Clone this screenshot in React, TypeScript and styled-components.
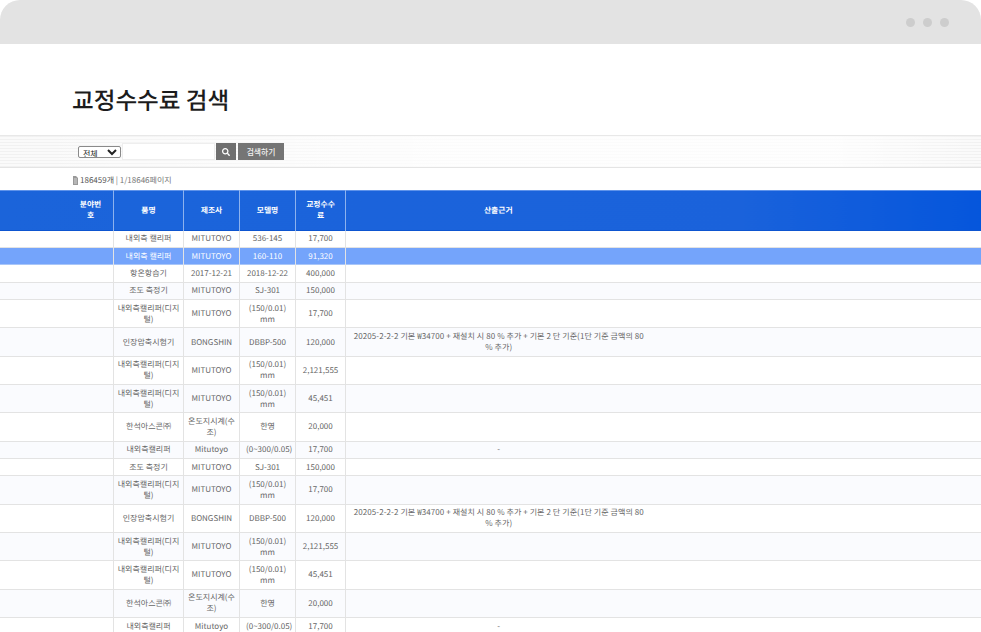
import React from 'react';
import styled, { createGlobalStyle } from 'styled-components';
import { FaSearch } from 'react-icons/fa';

const GlobalStyle = createGlobalStyle`
  html, body {
    margin: 0;
    padding: 0;
    background: #fff;
    overflow: hidden;
  }
  * {
    box-sizing: border-box;
  }
`;

const FONT = `"Noto Sans CJK KR", "Noto Sans", sans-serif`;

const Page = styled.div`
  width: 981px;
  height: 632px;
  overflow: hidden;
  font-family: ${FONT};
  color: #666;
  text-rendering: geometricPrecision;
`;

const WindowBar = styled.div`
  height: 44px;
  background: #e3e3e3;
  border-radius: 20px 20px 0 0;
  display: flex;
  justify-content: flex-end;
  align-items: center;
  gap: 8px;
  padding: 0 32px 0 0;
`;

const Dot = styled.span`
  width: 9px;
  height: 9px;
  border-radius: 50%;
  background: #cdcdcd;
`;

const Title = styled.h1`
  margin: 0;
  height: 91px;
  padding: 37px 0 0 72px;
  font-size: 23.6px;
  line-height: 36px;
  font-weight: 500;
  color: #1c1c1c;
`;

const SearchBand = styled.form`
  height: 33px;
  display: flex;
  align-items: center;
  padding: 0 0 0 78px;
  border-top: 1px solid #e8e8e8;
  border-bottom: 1px solid #e4e4e4;
  background:
    linear-gradient(90deg, rgba(255,255,255,0) 0, rgba(255,255,255,0.75) 45%, rgba(255,255,255,0.75) 85%, rgba(255,255,255,0) 100%),
    repeating-linear-gradient(180deg, #f1f1f1 0, #f1f1f1 1px, #fafafa 1px, #fafafa 3px);
`;

const Select = styled.select`
  width: 43px;
  height: 12px;
  font-size: 8px;
  line-height: 10px;
  padding: 0;
  font-family: ${FONT};
  color: #222;
  background: #fff;
  border: 1px solid #8a8a8a;
  border-radius: 2px;
`;

const SearchInput = styled.input`
  width: 93px;
  height: 17px;
  margin-left: 1px;
  border: 1px solid #eeeeee;
  background: #fff;
  padding: 0 3px;
`;

const IconButton = styled.button`
  width: 20px;
  height: 17px;
  margin-left: 1px;
  border: 0;
  padding: 0;
  background: #6f6f6f;
  color: #fff;
  font-size: 8px;
  display: flex;
  align-items: center;
  justify-content: center;
`;

const SubmitButton = styled.button`
  width: 46px;
  height: 17px;
  margin-left: 2px;
  border: 0;
  padding: 0;
  background: #757575;
  color: #f2f2f2;
  font-size: 7.8px;
  font-weight: 500;
  font-family: ${FONT};
`;

const Summary = styled.div`
  height: 22px;
  padding: 2px 0 0 73px;
  display: flex;
  align-items: center;
  gap: 2px;
  font-size: 8px;
  color: #777;
`;

const Strong = styled.span`
  color: #555;
`;

const Table = styled.table`
  width: 981px;
  table-layout: fixed;
  border-collapse: collapse;
  font-size: 8px;
  line-height: 11px;
`;

const HeadRow = styled.tr`
  height: 39.5px;
  background: linear-gradient(90deg, #1b64da 0, #1a62db 75%, #0556dc 100%);
  border-top: 1px solid #5f93ea;
  border-bottom: 1px solid #0d55d0;
`;

const Th = styled.th<{ $plain?: boolean }>`
  padding: 0 2px;
  color: #fff;
  font-weight: 700;
  font-size: 7.8px;
  text-align: center;
  word-break: break-all;
  border-right: ${p => (p.$plain ? '0' : '1px solid #8db2ee')};
`;

const NumberHead = styled.div`
  width: 25px;
  margin: 0 8px 0 auto;
`;

const FeeHead = styled.div`
  width: 34px;
  margin: 0 auto;
`;

const Tr = styled.tr<{ $tint?: boolean; $active?: boolean; $tall?: boolean }>`
  height: ${p => (p.$tall ? '28.3px' : '17.4px')};
  background: ${p => (p.$active ? '#74a4fb' : p.$tint ? '#fafbfe' : '#fff')};
  color: ${p => (p.$active ? '#fff' : '#666')};
  border-bottom: 1px solid ${p => (p.$active ? '#a9c6f8' : '#e3e3e3')};
`;

const Td = styled.td<{ $plain?: boolean }>`
  padding: 0 3px;
  text-align: center;
  vertical-align: middle;
  word-break: break-all;
  border-right: ${p => (p.$plain ? '0' : '1px solid #e3e3e3')};
`;

const ModelTd = styled(Td)`
  padding: 0 6px;
  word-break: normal;
`;

const BasisTd = styled(Td)`
  padding: 0 5px 0 6px;
  word-break: normal;
  letter-spacing: 0.09px;
`;

const DocIcon = () => (
  <svg width="5" height="9" viewBox="0 0 5 9">
    <path d="M0 0h3l2 2v7H0z" fill="#999" />
    <path d="M1 3h3M1 5h3M1 7h3" stroke="#eee" strokeWidth="0.7" />
  </svg>
);

const BASIS =
  '20205-2-2-2 기본 ₩34700 + 재설치 시 80 % 추가 + 기본 2 단 기준(1단 기준 금액의 80 % 추가)';

type Row = {
  name: string;
  maker: string;
  model: string;
  fee: string;
  basis?: string;
  tall?: boolean;
  tint?: boolean;
  active?: boolean;
};

const rows: Row[] = [
  { name: '내외측 캘리퍼', maker: 'MITUTOYO', model: '536-145', fee: '17,700' },
  { name: '내외측 캘리퍼', maker: 'MITUTOYO', model: '160-110', fee: '91,320', active: true },
  { name: '항온항습기', maker: '2017-12-21', model: '2018-12-22', fee: '400,000' },
  { name: '조도 측정기', maker: 'MITUTOYO', model: 'SJ-301', fee: '150,000', tint: true },
  { name: '내외측캘리퍼(디지털)', maker: 'MITUTOYO', model: '(150/0.01) mm', fee: '17,700', tall: true },
  { name: '인장압축시험기', maker: 'BONGSHIN', model: 'DBBP-500', fee: '120,000', basis: BASIS, tall: true, tint: true },
  { name: '내외측캘리퍼(디지털)', maker: 'MITUTOYO', model: '(150/0.01) mm', fee: '2,121,555', tall: true },
  { name: '내외측캘리퍼(디지털)', maker: 'MITUTOYO', model: '(150/0.01) mm', fee: '45,451', tall: true, tint: true },
  { name: '한석아스콘㈜', maker: '온도지시계(수조)', model: '한영', fee: '20,000', tall: true },
  { name: '내외측캘리퍼', maker: 'Mitutoyo', model: '(0~300/0.05)', fee: '17,700', basis: '-', tint: true },
  { name: '조도 측정기', maker: 'MITUTOYO', model: 'SJ-301', fee: '150,000' },
  { name: '내외측캘리퍼(디지털)', maker: 'MITUTOYO', model: '(150/0.01) mm', fee: '17,700', tall: true, tint: true },
  { name: '인장압축시험기', maker: 'BONGSHIN', model: 'DBBP-500', fee: '120,000', basis: BASIS, tall: true },
  { name: '내외측캘리퍼(디지털)', maker: 'MITUTOYO', model: '(150/0.01) mm', fee: '2,121,555', tall: true, tint: true },
  { name: '내외측캘리퍼(디지털)', maker: 'MITUTOYO', model: '(150/0.01) mm', fee: '45,451', tall: true },
  { name: '한석아스콘㈜', maker: '온도지시계(수조)', model: '한영', fee: '20,000', tall: true, tint: true },
  { name: '내외측캘리퍼', maker: 'Mitutoyo', model: '(0~300/0.05)', fee: '17,700', basis: '-' },
];

const App: React.FC = () => {
  return (
    <Page>
      <GlobalStyle />
      <WindowBar>
        <Dot />
        <Dot />
        <Dot />
      </WindowBar>
      <Title>교정수수료 검색</Title>
      <SearchBand onSubmit={e => e.preventDefault()}>
        <Select defaultValue="all">
          <option value="all">전체</option>
        </Select>
        <SearchInput />
        <IconButton aria-label="search">
          <FaSearch />
        </IconButton>
        <SubmitButton>검색하기</SubmitButton>
      </SearchBand>
      <Summary>
        <DocIcon />
        <span>
          <Strong>186459개</Strong> | 1/18646페이지
        </span>
      </Summary>
      <Table>
        <colgroup>
          <col style={{ width: 113.5 }} />
          <col style={{ width: 70 }} />
          <col style={{ width: 56 }} />
          <col style={{ width: 56 }} />
          <col style={{ width: 50 }} />
          <col style={{ width: 305 }} />
          <col />
        </colgroup>
        <thead>
          <HeadRow>
            <Th>
              <NumberHead>분야번호</NumberHead>
            </Th>
            <Th>품명</Th>
            <Th>제조사</Th>
            <Th>모델명</Th>
            <Th>
              <FeeHead>교정수수료</FeeHead>
            </Th>
            <Th $plain>산출근거</Th>
            <Th $plain />
          </HeadRow>
        </thead>
        <tbody>
          {rows.map((row, i) => (
            <Tr key={i} $tall={row.tall} $tint={row.tint} $active={row.active}>
              <Td />
              <Td>{row.name}</Td>
              <Td>{row.maker}</Td>
              <ModelTd>{row.model}</ModelTd>
              <Td>{row.fee}</Td>
              <BasisTd $plain>{row.basis}</BasisTd>
              <Td $plain />
            </Tr>
          ))}
        </tbody>
      </Table>
    </Page>
  );
};

export default App;
